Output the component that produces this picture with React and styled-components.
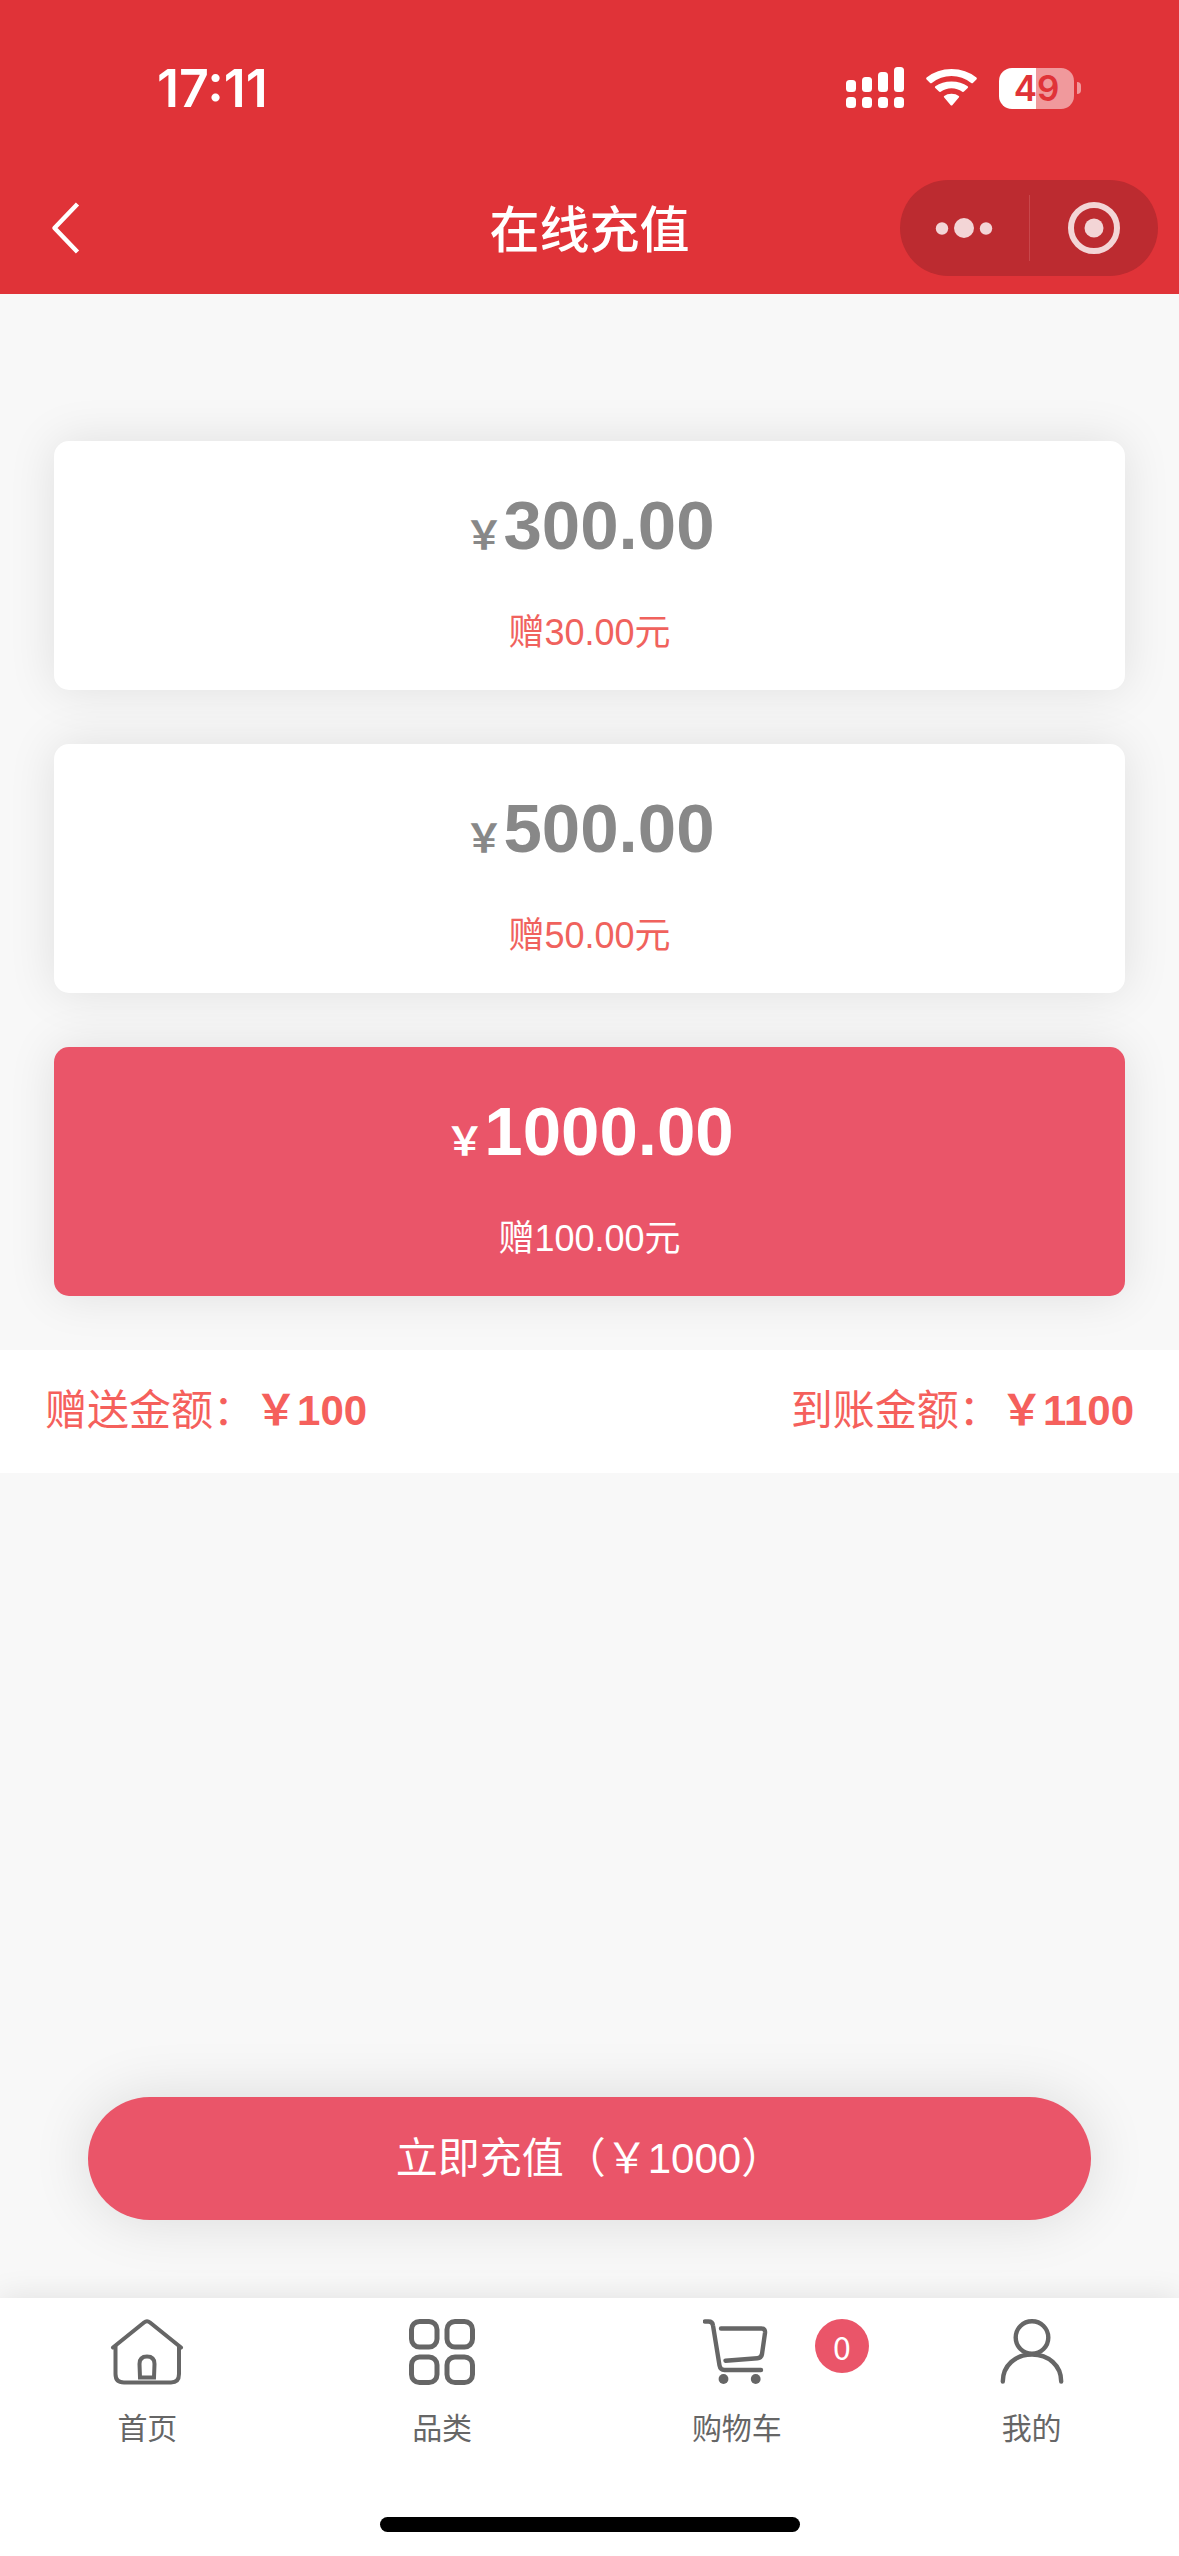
import React, { useState } from 'react';
import styled, { createGlobalStyle } from 'styled-components';

const plans = [
  { amount: 300, gift: 30 },
  { amount: 500, gift: 50 },
  { amount: 1000, gift: 100 },
];

const HomeIcon = () => (
  <svg width="74" height="68" viewBox="0 0 74 68" fill="none" stroke="currentColor" strokeWidth="4" strokeLinecap="round" strokeLinejoin="round">
    <path d="M3 29.500L34 4.500Q37 2 40 4.500L71 29.500" />
    <path d="M5.500 28.500V56Q5.500 64.500 14 64.500H61Q69 64.500 69 56V28.500" />
    <path d="M30 59.500L29.500 46Q29.500 38.500 37 38.500T44.500 46L44 59.500Z" strokeLinejoin="miter" />
  </svg>
);

const GridIcon = () => (
  <svg width="68" height="68" viewBox="0 0 68 68" fill="none" stroke="currentColor" strokeWidth="5">
    <rect x="3.500" y="3.500" width="25.500" height="25.500" rx="8" />
    <rect x="39" y="3.500" width="25.500" height="25.500" rx="8" />
    <rect x="3.500" y="39" width="25.500" height="25.500" rx="8" />
    <rect x="39" y="39" width="25.500" height="25.500" rx="8" />
  </svg>
);

const CartIcon = () => (
  <svg width="68" height="68" viewBox="0 0 68 68" fill="none" stroke="currentColor" strokeWidth="4.400" strokeLinecap="round" strokeLinejoin="round">
    <path d="M2 3.500H5.500Q9.500 3.500 10 7.500L16.500 47.500Q17.300 52 21.500 52H58" />
    <path d="M18 10.500H58.500Q62.500 10.500 62 15L59 36Q58.300 40 54.500 40.300L22.500 42.700" />
    <circle cx="20.500" cy="61" r="4.900" fill="currentColor" stroke="none" />
    <circle cx="52.700" cy="61" r="4.900" fill="currentColor" stroke="none" />
  </svg>
);

const UserIcon = () => (
  <svg width="68" height="68" viewBox="0 0 68 68" fill="none" stroke="currentColor" strokeWidth="4.400" strokeLinecap="round">
    <circle cx="34" cy="19.500" r="16.300" />
    <path d="M4.800 63.500C4.800 47.500 17.500 36.500 34 36.500S63.200 47.500 63.200 63.500" />
  </svg>
);

const SignalIcon = () => (
  <svg width="58" height="42" viewBox="0 0 58 42" fill="#fff">
    <rect x="0" y="13" width="10" height="12" rx="3.500" />
    <rect x="16" y="10" width="10" height="15" rx="3.500" />
    <rect x="32" y="5" width="10" height="20" rx="3.500" />
    <rect x="48" y="0" width="10" height="25" rx="3.500" />
    <rect x="0" y="30" width="10" height="11" rx="3.500" />
    <rect x="16" y="30" width="10" height="11" rx="3.500" />
    <rect x="32" y="30" width="10" height="11" rx="3.500" />
    <rect x="48" y="30" width="10" height="11" rx="3.500" />
  </svg>
);

const WifiIcon = () => (
  <svg width="51" height="42" viewBox="0 0 51 42" fill="#fff">
    <path d="M.6 12.400Q-.3 11.500.6 10.600Q11 2 25.500 2T50.400 10.600Q51.300 11.500 50.400 12.400L46.900 15.900Q46.100 16.700 45.200 15.900Q36.500 8.900 25.500 8.900T5.800 15.900Q4.900 16.700 4.100 15.900Z" />
    <path d="M9.300 21Q8.400 20.200 9.300 19.300Q16 14.400 25.500 14.400T41.700 19.300Q42.600 20.200 41.700 21L38 24.600Q37.200 25.400 36.300 24.700Q31.500 21.200 25.500 21.200T14.700 24.700Q13.800 25.400 13 24.600Z" />
    <path d="M18.200 30.600Q17.300 29.700 18.200 28.900Q21 26.800 25.500 26.800T32.800 28.900Q33.700 29.700 32.800 30.600L26.500 38Q25.500 39.200 24.500 38Z" />
  </svg>
);

const BackIcon = () => (
  <svg width="30" height="54" viewBox="0 0 30 54" fill="none" stroke="#fff" strokeWidth="4.500" strokeLinejoin="round">
    <path d="M26.500 3L3.500 27L26.500 51" />
  </svg>
);

const MoreIcon = () => (
  <svg width="58" height="54" viewBox="0 0 58 54" fill="#f3d5d6">
    <circle cx="7" cy="27.500" r="6.200" />
    <circle cx="29" cy="27" r="10" />
    <circle cx="51" cy="27.500" r="6.200" />
  </svg>
);

const CloseIcon = () => (
  <svg width="54" height="54" viewBox="0 0 54 54">
    <circle cx="27" cy="27" r="23" fill="none" stroke="#f3d5d6" strokeWidth="6" />
    <circle cx="27" cy="27" r="9.500" fill="#f3d5d6" />
  </svg>
);

const tabs = [
  { label: '首页', Icon: HomeIcon },
  { label: '品类', Icon: GridIcon },
  { label: '购物车', Icon: CartIcon, badge: 0 },
  { label: '我的', Icon: UserIcon },
];

const App = () => {
  const [selected, setSelected] = useState(2);
  const { amount, gift } = plans[selected];

  return (
    <Page>
      <GlobalStyle />
      <Header>
        <StatusBar>
          <Time>17:11</Time>
          <StatusIcons>
            <SignalIcon />
            <WifiIcon />
            <Battery>
              <BatteryBody>49</BatteryBody>
              <BatteryTip />
            </Battery>
          </StatusIcons>
        </StatusBar>
        <NavBar>
          <BackButton aria-label="返回"><BackIcon /></BackButton>
          <Title>在线充值</Title>
          <Capsule>
            <CapsuleButton aria-label="更多"><MoreIcon /></CapsuleButton>
            <CapsuleDivider />
            <CapsuleButton aria-label="关闭"><CloseIcon /></CapsuleButton>
          </Capsule>
        </NavBar>
      </Header>

      <Plans>
        {plans.map((plan, i) => (
          <Plan key={plan.amount} $active={i === selected} aria-pressed={i === selected} onClick={() => setSelected(i)}>
            <Price><Yen>￥</Yen>{plan.amount.toFixed(2)}</Price>
            <Gift $active={i === selected}>赠{plan.gift.toFixed(2)}元</Gift>
          </Plan>
        ))}
      </Plans>

      <Summary>
        <span>赠送金额：<b>￥{gift}</b></span>
        <span>到账金额：<b>￥{amount + gift}</b></span>
      </Summary>

      <Submit>立即充值（￥{amount}）</Submit>

      <Footer>
        <TabBar>
          {tabs.map(({ label, Icon, badge }) => (
            <Tab key={label} href="#">
              <Icon />
              <span>{label}</span>
              {badge !== undefined && <Badge>{badge}</Badge>}
            </Tab>
          ))}
        </TabBar>
        <HomeIndicator />
      </Footer>
    </Page>
  );
}

const GlobalStyle = createGlobalStyle`
  * {
    box-sizing: border-box;
  }

  body {
    margin: 0;
    background: #f8f8f8;
  }

  body, button {
    font-family: "Liberation Sans", "Noto Sans CJK SC", sans-serif;
  }

  button {
    border: 0;
    padding: 0;
    background: none;
    cursor: pointer;
  }

  svg {
    display: block;
    flex: none;
  }
`;

const Page = styled.div`
  display: flex;
  flex-direction: column;
  min-height: 100vh;
`;

const Header = styled.header`
  background: #e03338;
  color: #fff;
`;

const StatusBar = styled.div`
  display: flex;
  justify-content: space-between;
  align-items: center;
  height: 176px;
  padding: 0 98px 0 157px;
`;

const Time = styled.span`
  font-family: Inter, sans-serif;
  font-size: 52px;
  font-weight: 600;
`;

const StatusIcons = styled.div`
  display: flex;
  align-items: center;
  gap: 22px;
`;

const Battery = styled.div`
  display: flex;
  align-items: center;
  gap: 3px;
`;

const BatteryBody = styled.span`
  width: 75px;
  height: 41px;
  border-radius: 13px;
  background: linear-gradient(90deg, #fff 50%, #f0999c 50%);
  color: #e03338;
  font-family: Inter, sans-serif;
  font-size: 35px;
  font-weight: 600;
  line-height: 41px;
  text-align: center;
`;

const BatteryTip = styled.span`
  width: 4px;
  height: 12px;
  border-radius: 0 4px 4px 0;
  background: #f0999c;
`;

const NavBar = styled.div`
  display: grid;
  grid-template-columns: 1fr auto 1fr;
  align-items: center;
  height: 118px;
  padding: 0 21px 14px 51px;
`;

const BackButton = styled.button`
  justify-self: start;
`;

const Title = styled.h1`
  margin: 0;
  padding: 5px 30px 0 0;
  font-size: 50px;
  font-weight: 500;
  line-height: 60px;
`;

const Capsule = styled.div`
  display: flex;
  align-items: center;
  justify-self: end;
  width: 258px;
  height: 96px;
  border-radius: 48px;
  background: #bc2b30;
`;

const CapsuleButton = styled.button`
  display: flex;
  flex: 1;
  justify-content: center;
`;

const CapsuleDivider = styled.span`
  width: 1px;
  height: 66px;
  background: #c9474b;
`;

const Plans = styled.main`
  display: flex;
  flex-direction: column;
  gap: 54px;
  padding: 147px 54px 54px;
`;

const Plan = styled.button`
  display: flex;
  flex-direction: column;
  align-items: center;
  gap: 30px;
  height: 249px;
  padding-top: 44px;
  border-radius: 15px;
  background: ${p => (p.$active ? '#ea5569' : '#fff')};
  color: ${p => (p.$active ? '#fff' : '#888')};
  box-shadow: 0 0 48px rgba(0, 0, 0, 0.1);
`;

const Price = styled.strong`
  font-size: 69px;
  line-height: 81px;
`;

const Yen = styled.small`
  font-size: 39px;
`;

const Gift = styled.span`
  color: ${p => (p.$active ? '#fff' : '#f0625d')};
  font-size: 36px;
  line-height: 54px;
`;

const Summary = styled.section`
  display: flex;
  justify-content: space-between;
  align-items: center;
  height: 123px;
  padding: 0 45px 10px;
  background: #fff;
  color: #f5605c;
  font-size: 42px;
`;

const Submit = styled.button`
  align-self: center;
  width: 85%;
  height: 123px;
  margin: auto 0 78px;
  padding-bottom: 8px;
  border-radius: 62px;
  background: #ea5569;
  color: #fff;
  box-shadow: 0 0 60px rgba(0, 0, 0, 0.12);
  font-size: 42px;
`;

const Footer = styled.footer`
  background: #fff;
  box-shadow: 0 0 30px rgba(0, 0, 0, 0.1);
`;

const TabBar = styled.nav`
  display: grid;
  grid-template-columns: repeat(4, 1fr);
  padding-top: 20px;
`;

const Tab = styled.a`
  position: relative;
  display: flex;
  flex-direction: column;
  align-items: center;
  gap: 22px;
  color: #666;
  font-size: 30px;
  line-height: 42px;
  text-decoration: none;
`;

const Badge = styled.span`
  position: absolute;
  top: 1px;
  left: calc(50% + 78px);
  width: 54px;
  height: 54px;
  border-radius: 50%;
  background: #ea5569;
  color: #fff;
  font-family: "Noto Sans CJK SC", sans-serif;
  font-size: 32px;
  line-height: 54px;
  text-align: center;
`;

const HomeIndicator = styled.div`
  width: 420px;
  height: 15px;
  margin: 67px auto 24px;
  border-radius: 8px;
  background: #000;
`;

export default App;
